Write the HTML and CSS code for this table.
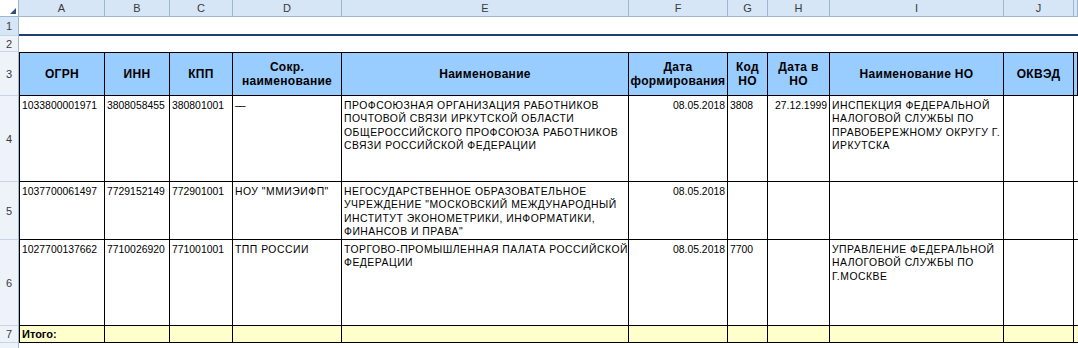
FILE: index.html
```html
<!DOCTYPE html>
<html lang="ru">
<head>
<meta charset="utf-8">
<title>Реестр</title>
<link rel="stylesheet" href="styles.css">
</head>
<body>
<div class="sheet">
  <div class="row colhead">
    <div class="corner"><span class="tri"></span></div>
    <div class="ch">A</div><div class="ch">B</div><div class="ch">C</div><div class="ch">D</div>
    <div class="ch">E</div><div class="ch">F</div><div class="ch">G</div><div class="ch">H</div>
    <div class="ch">I</div><div class="ch">J</div><div class="ch"></div>
  </div>

  <div class="row r1">
    <div class="rn sel">1</div>
    <div class="blank span-all"></div>
  </div>

  <div class="row r2">
    <div class="rn">2</div>
    <div class="blank span-all"></div>
  </div>

  <div class="row r3">
    <div class="rn">3</div>
    <div class="hc first">ОГРН</div>
    <div class="hc">ИНН</div>
    <div class="hc">КПП</div>
    <div class="hc">Сокр.<br>наименование</div>
    <div class="hc">Наименование</div>
    <div class="hc">Дата<br>формирования</div>
    <div class="hc">Код<br>НО</div>
    <div class="hc">Дата в<br>НО</div>
    <div class="hc">Наименование НО</div>
    <div class="hc">ОКВЭД</div>
    <div class="hc"></div>
  </div>

  <div class="row r4">
    <div class="rn">4</div>
    <div class="dc first">1033800001971</div>
    <div class="dc">3808058455</div>
    <div class="dc">380801001</div>
    <div class="dc dash">– –</div>
    <div class="dc up">ПРОФСОЮЗНАЯ ОРГАНИЗАЦИЯ РАБОТНИКОВ<br>ПОЧТОВОЙ СВЯЗИ ИРКУТСКОЙ ОБЛАСТИ<br>ОБЩЕРОССИЙСКОГО ПРОФСОЮЗА РАБОТНИКОВ<br>СВЯЗИ РОССИЙСКОЙ ФЕДЕРАЦИИ</div>
    <div class="dc num">08.05.2018</div>
    <div class="dc">3808</div>
    <div class="dc num">27.12.1999</div>
    <div class="dc up">ИНСПЕКЦИЯ ФЕДЕРАЛЬНОЙ<br>НАЛОГОВОЙ СЛУЖБЫ ПО<br>ПРАВОБЕРЕЖНОМУ ОКРУГУ Г.<br>ИРКУТСКА</div>
    <div class="dc"></div>
    <div class="dc"></div>
  </div>

  <div class="row r5">
    <div class="rn">5</div>
    <div class="dc first">1037700061497</div>
    <div class="dc">7729152149</div>
    <div class="dc">772901001</div>
    <div class="dc up">НОУ "ММИЭИФП"</div>
    <div class="dc up">НЕГОСУДАРСТВЕННОЕ ОБРАЗОВАТЕЛЬНОЕ<br>УЧРЕЖДЕНИЕ "МОСКОВСКИЙ МЕЖДУНАРОДНЫЙ<br>ИНСТИТУТ ЭКОНОМЕТРИКИ, ИНФОРМАТИКИ,<br>ФИНАНСОВ И ПРАВА"</div>
    <div class="dc num">08.05.2018</div>
    <div class="dc"></div>
    <div class="dc"></div>
    <div class="dc"></div>
    <div class="dc"></div>
    <div class="dc"></div>
  </div>

  <div class="row r6">
    <div class="rn">6</div>
    <div class="dc first">1027700137662</div>
    <div class="dc">7710026920</div>
    <div class="dc">771001001</div>
    <div class="dc up">ТПП РОССИИ</div>
    <div class="dc up">ТОРГОВО-ПРОМЫШЛЕННАЯ ПАЛАТА РОССИЙСКОЙ<br>ФЕДЕРАЦИИ</div>
    <div class="dc num">08.05.2018</div>
    <div class="dc">7700</div>
    <div class="dc"></div>
    <div class="dc up">УПРАВЛЕНИЕ ФЕДЕРАЛЬНОЙ<br>НАЛОГОВОЙ СЛУЖБЫ ПО<br>Г.МОСКВЕ</div>
    <div class="dc"></div>
    <div class="dc"></div>
  </div>

  <div class="row r7">
    <div class="rn">7</div>
    <div class="tc first bold">Итого:</div>
    <div class="tc"></div><div class="tc"></div><div class="tc"></div><div class="tc"></div>
    <div class="tc"></div><div class="tc"></div><div class="tc"></div><div class="tc"></div>
    <div class="tc"></div><div class="tc"></div>
  </div>

  <div class="row r8">
    <div class="rn"></div>
    <div class="blank span-all"></div>
  </div>
</div>
</body>
</html>
```

FILE: styles.css
```css
* { box-sizing: border-box; }

html, body {
  margin: 0;
  padding: 0;
  background: #ffffff;
}

body {
  width: 1078px;
  height: 348px;
  overflow: hidden;
  font-family: "Liberation Sans", Arial, sans-serif;
  font-size: 10.4px;
  color: #000;
}

.sheet {
  display: flex;
  flex-direction: column;
}

.row {
  display: grid;
  grid-template-columns: 19px 86px 65px 63px 109px 287px 99px 40px 62px 174px 70px 1fr;
}

.span-all { grid-column: 2 / -1; }

/* column header */
.colhead { height: 17px; }
.corner {
  position: relative;
  background: #ffffff;
  border-right: 1px solid #9eb6ce;
  border-bottom: 1px solid #9eb6ce;
}
.tri {
  position: absolute;
  right: 2px;
  bottom: 2px;
  width: 0;
  height: 0;
  border-left: 6px solid transparent;
  border-bottom: 6px solid #2f4f7f;
}
.ch {
  background: #d6e6f6;
  border-right: 1px solid #9eb6ce;
  border-bottom: 1px solid #9eb6ce;
  display: flex;
  align-items: center;
  justify-content: center;
  font-size: 11px;
  color: #3a3a3a;
}

/* row numbers */
.rn {
  background: #eef3f9;
  border-right: 1px solid #9eb6ce;
  border-bottom: 1px solid #c5d5e6;
  display: flex;
  align-items: center;
  justify-content: center;
  font-size: 11px;
  color: #3a3a3a;
}
.rn.sel { background: #d6e6f6; }

.r1 { height: 19px; }
.r1 .blank { border-bottom: 2px solid #1f3e74; }
.r2 { height: 16px; }
.r3 { height: 44px; }
.r4 { height: 86px; }
.r5 { height: 58px; }
.r6 { height: 86px; }
.r7 { height: 17px; }
.r8 { height: 10px; }
.r8 .rn { border-bottom: none; }

/* header cells */
.hc {
  background: #99ccff;
  border-top: 1px solid #000;
  border-right: 1px solid #000;
  border-bottom: 1px solid #000;
  display: flex;
  align-items: center;
  justify-content: center;
  text-align: center;
  font-weight: bold;
  font-size: 12px;
  line-height: 14px;
  letter-spacing: 0.3px;
}

/* data cells */
.dc {
  border-right: 1px solid #000;
  border-bottom: 1px solid #000;
  padding: 3px 2px 0 2px;
  line-height: 13.3px;
  white-space: nowrap;
  overflow: visible;
}
.dc.num { text-align: right; }
.dc.up { letter-spacing: 0.5px; }
.dc.dash { letter-spacing: -2px; }

.first { border-left: 1px solid #000; }

/* total row */
.tc {
  background: #ffffcc;
  border-right: 1px solid #000;
  border-bottom: 1px solid #000;
  padding: 1px 2px 0 2px;
  font-size: 11px;
  line-height: 15px;
}
.bold { font-weight: bold; }
```
